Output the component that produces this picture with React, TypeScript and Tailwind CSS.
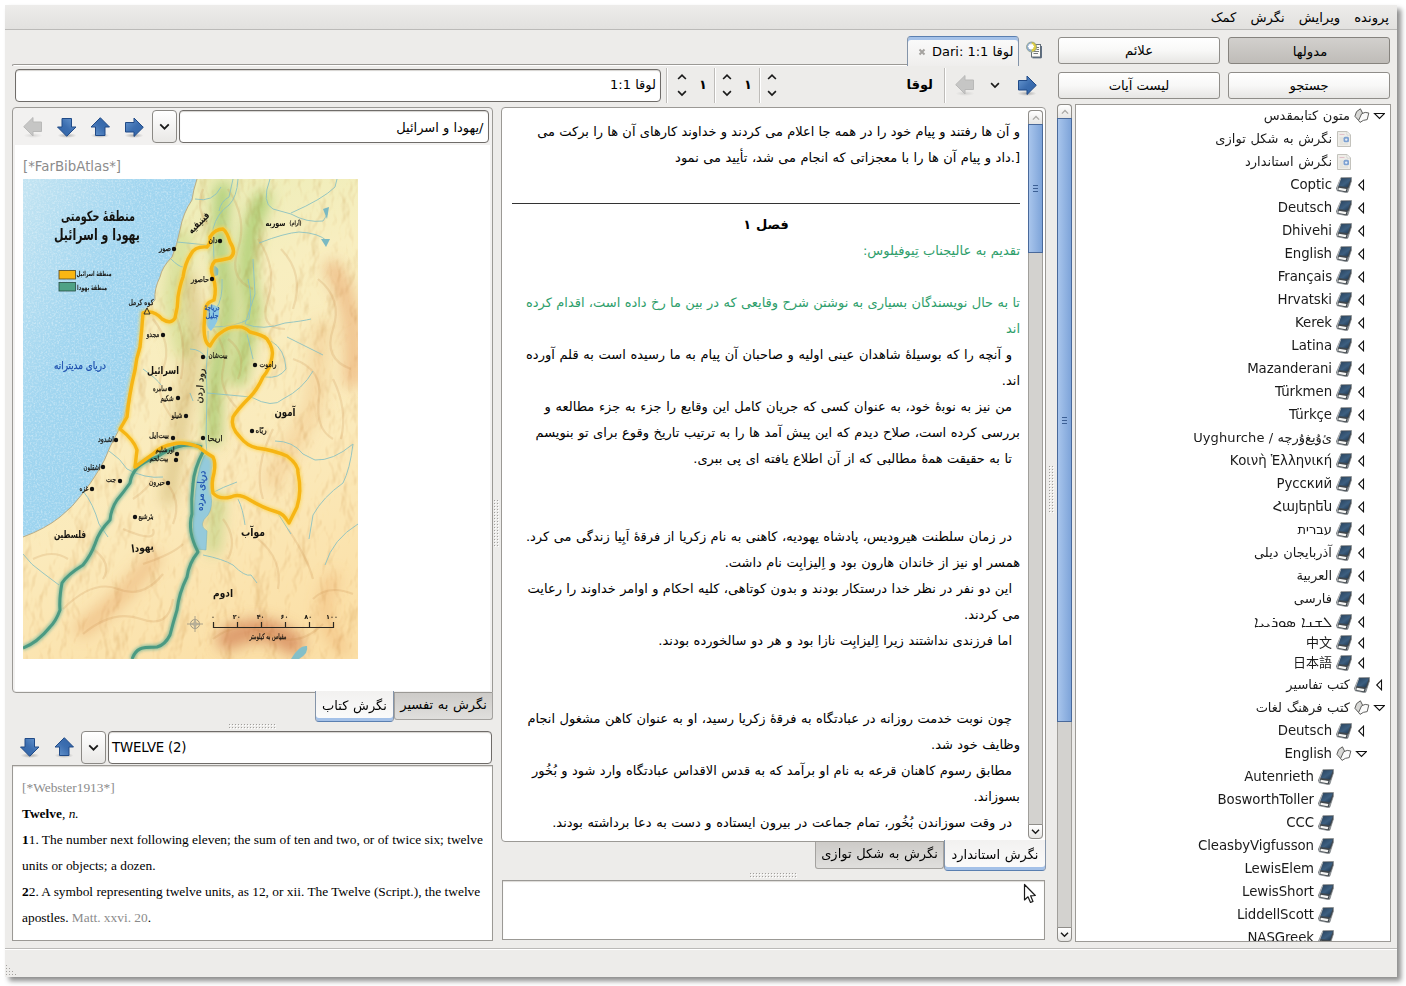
import React from 'react';

const UI = "font-['DejaVu_Sans','Noto_Sans_CJK_SC',sans-serif]";

function Arrow({ dir, muted = false }: { dir: 'left' | 'right' | 'up' | 'down'; muted?: boolean }) {
  const turn = { right: 0, down: 90, left: 180, up: 270 }[dir];
  return (
    <svg width="24" height="24" viewBox="0 0 24 24" className="shrink-0">
      <defs>
        <linearGradient id="arrowBlue" x1="0" y1="0" x2="1" y2="1">
          <stop offset="0" stopColor="#6c9bd2" />
          <stop offset="0.5" stopColor="#3c6eb0" />
          <stop offset="1" stopColor="#2f62a5" />
        </linearGradient>
        <radialGradient id="arrowShade">
          <stop offset="0" stopColor="#000" stopOpacity="0.28" />
          <stop offset="1" stopColor="#000" stopOpacity="0" />
        </radialGradient>
      </defs>
      <ellipse cx="12" cy="20.5" rx="9.5" ry="2.5" fill="url(#arrowShade)" opacity={muted ? 0.4 : 1} />
      <path
        transform={`rotate(${turn} 12 12)`}
        d="M3.5 7.5H12V3L21.3 12.3L12 21.5V17H3.500Z"
        fill={muted ? '#c6c6c5' : 'url(#arrowBlue)'}
        stroke={muted ? '#b9b9b8' : '#204a87'}
        strokeWidth="1"
        strokeLinejoin="round"
      />
    </svg>
  );
}

function Chevron({ up = false, w = 9, color = '#1a1a1a' }: { up?: boolean; w?: number; color?: string }) {
  return (
    <svg width={w} height={w} viewBox="0 0 9 9" className="shrink-0">
      <path d={up ? 'M1 6.3L4.5 2.8L8 6.3' : 'M1 2.8L4.5 6.3L8 2.8'} fill="none" stroke={color} strokeWidth="1.5" />
    </svg>
  );
}

function ComboButton() {
  return (
    <div className="flex h-[33px] w-[25px] shrink-0 items-center justify-center rounded-[4px] border border-[#8b8985] bg-linear-to-b from-white to-[#e9e8e6]">
      <Chevron w={11} />
    </div>
  );
}

function Spinner() {
  return (
    <div className="flex w-[14px] flex-col items-center gap-[6px]">
      <Chevron up w={10} />
      <Chevron w={10} />
    </div>
  );
}

function Grip({ vertical = false }: { vertical?: boolean }) {
  const cols = vertical ? 2 : 16;
  const rowCount = vertical ? 16 : 2;
  const dots: string[] = [];
  for (let r = 0; r < rowCount; r++) {
    for (let c = 0; c < cols; c++) dots.push(`M${c * 3} ${r * 3}h1v1h-1z`);
  }
  return (
    <svg width={cols * 3} height={rowCount * 3} className="shrink-0">
      <path d={dots.join('')} fill="#fff" transform="translate(1 1)" />
      <path d={dots.join('')} fill="#a19f9c" />
    </svg>
  );
}

function BookIcon() {
  return (
    <svg width="16" height="16" viewBox="0 0 16 16" className="shrink-0">
      <defs>
        <linearGradient id="cover" x1="0" y1="0" x2="1" y2="1">
          <stop offset="0" stopColor="#27415c" />
          <stop offset="0.55" stopColor="#3d5f80" />
          <stop offset="1" stopColor="#1a3149" />
        </linearGradient>
      </defs>
      <path
        d="M4.900 0.700L15.500 0.500L15.400 4.200L11.800 15.200L9.900 15.500L1.200 13.800L0.400 11.200Z"
        fill="#3f464c"
        stroke="#85898c"
        strokeWidth="0.7"
        strokeLinejoin="round"
      />
      <path d="M5.300 1.300L14.900 1.200L11.700 10.200L2.600 8.900Z" fill="url(#cover)" />
      <path d="M2.600 10.700L10.400 12L9.700 14.200L2.500 12.900Z" fill="#f4f4f2" />
      <path d="M4.700 1.500L1.300 11L1.900 13.200" fill="none" stroke="#c5c8ca" strokeWidth="0.8" />
      <path d="M12.400 10.800L11.300 14.500" stroke="#b5b9bc" strokeWidth="0.7" />
    </svg>
  );
}

function OpenBookIcon() {
  return (
    <svg width="16" height="16" viewBox="0 0 16 16" className="shrink-0">
      <path d="M2.600 3.600L6.400 0.800L8.600 5.200L5.600 13.600L0.900 8.300Z" fill="#d8d8d6" stroke="#5c5c5a" strokeWidth="1" strokeLinejoin="round" />
      <path d="M7.600 5.800Q11.200 3.400 14.800 5L13.200 11.600Q9 11.800 6 14.400L4.600 12.400Z" fill="#fafafa" stroke="#60605e" strokeWidth="1" strokeLinejoin="round" />
    </svg>
  );
}

function PageIcon() {
  return (
    <svg width="16" height="16" viewBox="0 0 16 16" className="shrink-0">
      <path d="M1.500 0.500H11L14.500 4V15.500H1.500Z" fill="#eeede8" stroke="#c3c2bc" />
      <path d="M11 0.500V4H14.500Z" fill="#fff" stroke="#c9c8c3" strokeWidth="0.7" />
      <path d="M3.500 3.500H8.500" stroke="#e2c0ca" />
      <path d="M3.500 7H7M3.500 9H7M3.500 11H7M3.500 13H12" stroke="#dadad4" />
      <rect x="7.500" y="5.800" width="5.500" height="5.500" rx="1.500" fill="#7ea2d2" />
      <circle cx="10.200" cy="8.600" r="1.200" fill="#e8eef6" />
    </svg>
  );
}

function NewTabIcon() {
  return (
    <svg width="16" height="18" viewBox="0 0 16 18" className="shrink-0">
      <rect x="5.500" y="3.500" width="9" height="12.500" fill="#fafaf8" stroke="#66717b" strokeWidth="1" />
      <path d="M10 6.500H13M10.500 8.500H13M7.500 10.500H13M7.500 12.500H12" stroke="#777b7d" />
      <path d="M15.300 5V16.800H6.500" fill="none" stroke="#3d5068" strokeWidth="1" />
      <circle cx="5.600" cy="6" r="5" fill="#dccb3e" stroke="#8b9a7e" strokeWidth="0.8" />
      <path d="M5.600 1A5 5 0 0 0 5.600 11Z" fill="#8ea9c8" />
      <path d="M5 2.400V8.600M1.900 5.500H8.100M2.900 3.400L7.100 7.600M7.100 3.400L2.900 7.600" stroke="#fff" strokeWidth="1.400" />
    </svg>
  );
}

function Expander({ open }: { open: boolean }) {
  return (
    <svg width="12" height="12" viewBox="0 0 12 12" className="shrink-0">
      <path
        d={open ? 'M1.500 3.500H11.500L6.500 8.500Z' : 'M8.500 1.200V10.800L3.700 6Z'}
        fill="#fff"
        stroke="#111"
        strokeWidth="1.1"
      />
    </svg>
  );
}

type Row = [text: string, level: number, kind: 'closed' | 'open' | 'page' | 'leaf', height?: string];

const SHORT = 'h-[20px]';

const rows: Row[] = [
  ['متون کتابمقدس', 0, 'open', 'h-[22px]'],
  ['نگرش به شکل توازی', 1, 'page'],
  ['نگرش استاندارد', 1, 'page'],
  ['Coptic', 1, 'closed'],
  ['Deutsch', 1, 'closed'],
  ['Dhivehi', 1, 'closed'],
  ['English', 1, 'closed'],
  ['Français', 1, 'closed'],
  ['Hrvatski', 1, 'closed'],
  ['Kerek', 1, 'closed'],
  ['Latina', 1, 'closed'],
  ['Mazanderani', 1, 'closed'],
  ['Türkmen', 1, 'closed'],
  ['Türkçe', 1, 'closed'],
  ['Uyghurche / ئ\u200Cۇ\u200Cيغ\u200Cۇرچە', 1, 'closed'],
  ['Κοινὴ Ἑλληνική', 1, 'closed'],
  ['Русский', 1, 'closed'],
  ['Հայերեն', 1, 'closed'],
  ['עברית', 1, 'closed'],
  ['آذربایجان دیلی', 1, 'closed'],
  ['العربية', 1, 'closed'],
  ['فارسی', 1, 'closed'],
  ['ܠܫܢܐ ܣܘܪܝܝܐ', 1, 'closed'],
  ['中文', 1, 'closed', SHORT],
  ['日本語', 1, 'closed', SHORT],
  ['کتب تفاسیر', 0, 'closed'],
  ['کتب فرهنگ لغات', 0, 'open'],
  ['Deutsch', 1, 'closed'],
  ['English', 1, 'open'],
  ['Autenrieth', 2, 'leaf'],
  ['BosworthToller', 2, 'leaf'],
  ['CCC', 2, 'leaf'],
  ['CleasbyVigfusson', 2, 'leaf'],
  ['LewisElem', 2, 'leaf'],
  ['LewisShort', 2, 'leaf'],
  ['LiddellScott', 2, 'leaf'],
  ['NASGreek', 2, 'leaf'],
];

const indents = ['pr-[5px]', 'pr-[23px]', 'pr-[41px]'];

const scriptSize = (text: string) => {
  if (text.startsWith('Uyg')) return 'tracking-[0.1px]';
  if (/^[A-Z\u0370-\u058F]/.test(text)) return 'text-[13.33px] tracking-[-0.08px]';
  if (/^[\u0700-\u074F]/.test(text)) return 'text-[15px]';
  if (/^[\u0600-\u06FF]/.test(text)) return '[word-spacing:0.5px]';
  return '';
};

function Tree() {
  return (
    <div className="h-[838px] w-[316px] overflow-hidden border border-[#9c9a96] bg-white text-[#1a1a1a]">
      {rows.map(([text, level, kind, height], i) => (
        <div key={i} className={'flex items-center justify-end ' + indents[level] + ' ' + (height ?? 'h-[23px]')}>
          <span className={'whitespace-nowrap leading-[20px] ' + scriptSize(text)}>{text}</span>
          <span className="ml-[4px] flex">
            {kind === 'open' ? <OpenBookIcon /> : kind === 'page' ? <PageIcon /> : <BookIcon />}
          </span>
          <span className="ml-[3px] flex w-[12px]">
            {(kind === 'open' || kind === 'closed') && <Expander open={kind === 'open'} />}
          </span>
        </div>
      ))}
    </div>
  );
}

function ScrollBar({ thumb }: { thumb: string }) {
  return (
    <div className="flex h-full w-[15px] shrink-0 flex-col rounded-[4px] bg-[#d3d2cf]">
      <div className="flex h-[14px] shrink-0 items-center justify-center rounded-t-[4px] border border-b-0 border-[#8f8d89] bg-linear-to-b from-white to-[#e6e5e3]">
        <Chevron up w={8} color="#aaa9a6" />
      </div>
      <div
        className={
          'flex shrink-0 flex-col items-center justify-center gap-[2px] border border-[#49699a] bg-linear-to-r from-[#a8c5ec] to-[#7ea4d9] ' +
          thumb
        }
      >
        <div className="h-px w-[5px] bg-[#3c5f94]" />
        <div className="h-px w-[5px] bg-[#3c5f94]" />
        <div className="h-px w-[5px] bg-[#3c5f94]" />
      </div>
      <div className="grow border-x border-[#a19f9b]" />
      <div className="flex h-[15px] shrink-0 items-center justify-center rounded-b-[4px] border border-[#8f8d89] bg-linear-to-b from-white to-[#e6e5e3]">
        <Chevron w={9} />
      </div>
    </div>
  );
}

type Verse = [text: string, cls?: string];

const verses: Verse[] = [
  ['تقدیم به عالیجناب تِیوفیلوس:', 'text-[#2e9e6b]'],
  [''],
  ['تا به حال نویسندگان بسیاری به نوشتن شرح وقایعی که در بین ما رخ داده است، اقدام کرده', 'text-[#2e9e6b] [word-spacing:0.2px]'],
  ['اند', 'text-[#2e9e6b]'],
  ['و آنچه را که بوسیل\u200D\u200Cۀ شاهدان عینی اولیه و صاحبان آن پیام به ما رسیده است به قلم آورده', 'pr-[8px] [word-spacing:0.5px]'],
  ['اند.'],
  ['من نیز به نوب\u200D\u200Cۀ خود، به عنوان کسی که جریان کامل این وقایع را جزء به جزء مطالعه و', 'pr-[8px] [word-spacing:0.55px]'],
  ['بررسی کرده است، صلاح دیدم که این پیش آمد ها را به ترتیب تاریخ وقوع برای تو بنویسم', '[word-spacing:0.38px]'],
  ['تا به حقیقت هم\u200D\u200Cۀ مطالبی که از آن اطلاع یافته ای پی ببری.', 'pr-[8px]'],
  [''],
  [''],
  ['در زمان سلطنت هیرودیس، پادشاه یهودیه، کاهنی به نام زکریا از فرق\u200D\u200Cۀ اَبِیا زندگی می کرد.', 'pr-[8px]'],
  ['همسر او نیز از خاندان هارون بود و اِلیزابِت نام داشت.', '[word-spacing:0.4px]'],
  ['این دو نفر در نظر خدا درستکار بودند و بدون کوتاهی، کلیه احکام و اوامر خداوند را رعایت', 'pr-[8px] [word-spacing:0.25px]'],
  ['می کردند.'],
  ['اما فرزندی نداشتند زیرا اِلیزابِت نازا بود و هر دو سالخورده بودند.', 'pr-[8px] [word-spacing:0.45px]'],
  [''],
  [''],
  ['چون نوبت خدمت روزانه در عبادتگاه به فرق\u200D\u200Cۀ زکریا رسید، او به عنوان کاهن مشغول انجام', 'pr-[8px]'],
  ['وظایف خود شد.'],
  ['مطابق رسوم کاهنان قرعه به نام او برآمد که به قدس الاقداس عبادتگاه وارد شود و بُخُور', 'pr-[8px] [word-spacing:0.2px]'],
  ['بسوزاند.'],
  ['در وقت سوزاندن بُخُور، تمام جماعت در بیرون ایستاده و دست به دعا برداشته بودند.', 'pr-[8px] [word-spacing:0.45px]'],
];

const COAST =
  'M174 0Q170 12 169 21Q160 34 157 51Q154 66 149 78Q139 88 137 98Q131 110 132 121L120 133L119 151L114 178L107 211L100 244Q95 252 87 268Q82 282 74 294Q68 304 60 314Q50 328 37 338Q22 350 0 358';

const ISRAEL =
  'M124 133Q132 132 139 140Q148 146 152 139Q155 128 155 118Q157 106 160 98Q162 84 168 75Q172 67 184 68Q188 64 187 58Q192 50 200 50Q204 53 207 63Q214 74 207 79Q199 81 192 82Q186 88 190 98Q194 110 191 121Q182 124 182 132L181 148Q181 164 187 167Q192 158 196 155Q206 147 214 148Q221 147 227 153Q240 156 244 160Q251 170 249 178Q247 190 240 198Q234 211 227 218Q214 231 210 238Q207 248 217 258Q224 267 234 269Q250 271 264 277Q276 286 275 294Q279 312 274 328L266 344Q260 334 254 333Q240 329 227 321Q216 314 208 318Q196 321 190 314Q188 304 191 294Q193 284 190 278Q180 272 176 268Q160 262 150 265Q138 267 130 275L112 288L114 271Q111 261 97 250L104 238Q106 216 112 191Q113 180 117 168Q119 150 120 134Z';

const JUDAH_W =
  'M179 268Q166 264 154 268Q144 271 134 278Q121 282 114 289Q108 296 107 304Q100 314 94 321Q88 330 87 341Q76 352 72 365Q68 376 60 386Q44 396 39 404Q36 420 37 431Q33 442 27 448Q14 464 0 469';
const JUDAH_E =
  'M180 273Q171 290 170 305Q168 320 169 335Q164 352 175 373Q166 384 164 398Q156 414 154 431Q150 444 147 456Q142 466 134 468Q120 468 117 470Q112 472 109 480';

const RIVERS = [
  'M215 0Q214 18 206 26Q194 34 190 50L191 82M199 100Q200 120 193 130',
  'M185 152L185 167Q182 190 184 214L183 262L184 276',
  'M247 0Q238 24 250 30L268 35Q284 44 300 42Q306 34 304 30M268 34Q300 20 312 8L314 0',
  'M236 64Q262 54 276 53Q296 54 304 62',
  'M210 0L206 18Q198 22 196 32M172 20Q190 24 198 8',
  'M154 63L184 66M148 80Q156 88 160 88',
  'M190 148Q212 148 226 140Q230 120 225 100M230 80L232 115L222 145Q240 152 262 144Q280 142 288 140',
  'M224 155L230 180M248 162Q262 170 263 190Q256 200 242 198M264 158L300 176',
  'M184 214L228 218Q250 230 260 220Q280 210 290 192',
  'M167 170Q178 170 184 180M167 214L170 222',
  'M189 314Q200 308 214 303M215 320Q220 330 222 346M254 333L268 355',
  'M252 262Q270 262 280 275L292 281Q310 282 330 265Q327 290 320 304Q300 318 290 336L286 360M335 345Q310 360 302 386',
  'M180 376Q200 380 210 386Q222 398 228 396L234 404',
  'M60 312Q70 324 76 345L85 358M86 272Q98 280 104 290Q122 300 140 298',
  'M0 375Q8 386 20 394L36 406M120 190Q134 200 138 206',
];

const RIDGES = [
  'M190 150Q205 170 200 190T215 230M205 160Q225 175 215 200',
  'M235 60Q255 90 245 120T262 150M258 70Q282 95 270 130',
  'M270 180Q300 190 296 220T310 260M250 250Q230 290 240 320',
  'M130 140Q150 165 140 190T150 240M150 130Q165 160 158 200',
  'M140 300Q160 320 150 345M120 385Q150 375 160 365M100 350Q135 365 130 350',
  'M40 430Q70 400 95 410T140 395M60 455Q90 430 118 440T150 420',
  'M200 340Q215 360 205 380M235 360Q260 380 255 410M265 350Q285 380 290 400',
  'M190 460Q215 440 245 455T300 445M290 420Q305 405 330 415',
  'M10 380Q30 370 45 380M70 370Q90 385 80 400M110 320Q125 310 130 300',
  'M295 100Q320 120 310 150T328 190M310 200Q325 230 318 260',
  'M205 10Q225 40 215 70T230 110M180 10Q172 30 185 45',
];

const SPOTS: [number, number][] = [
  [151, 70], [197, 62], [189, 100], [140, 156], [180, 178], [232, 186], [147, 210], [155, 219], [163, 237],
  [93, 261], [150, 259], [180, 259], [229, 252], [154, 275], [153, 281], [80, 288], [97, 302], [69, 310], [145, 304], [112, 338],
];

type Label = [text: string, cx: number, y: number, width: number, size: number, style?: string, turn?: number];

const LABELS: Label[] = [
  ['منطقهٔ حکومتی', 75, 42, 74, 14, 'bold'],
  ['یهودا و اسرائیل', 74, 61, 86, 15.5, 'bold'],
  ['منطقهٔ اسرائیل', 71, 97, 35, 7, 'bold'],
  ['منطقهٔ یهودا', 69, 111, 30, 7, 'bold'],
  ['فینیقیه', 178, 46, 26, 10, 'bold', -45],
  ['سوریه', 252.5, 47, 20, 8.5, 'bold'],
  ['(اَرام)', 272.5, 46, 12, 6],
  ['صور', 142, 72, 12, 8],
  ['دان', 190, 64, 9, 8],
  ['حاصور', 177, 103, 18, 8],
  ['دریاچهٔ', 189, 131, 15, 7, 'blue'],
  ['جلیل', 189, 139, 13, 7, 'blue'],
  ['کوه کرمل', 118, 126, 25, 8],
  ['مجدو', 130, 158, 13, 8],
  ['بیت‌شان', 195, 179, 19, 8],
  ['راموت', 245, 188, 17, 8],
  ['دریای مدیترانه', 57, 190, 52, 10.5, 'blue'],
  ['اسرائیل', 140, 195, 32, 11, 'bold'],
  ['سامره', 137, 212, 14, 7.5],
  ['شکیم', 144, 222, 13, 8],
  ['شیلو', 154, 239, 11, 8],
  ['رود اردن', 180, 207, 35, 9, 'plain', -86],
  ['آمون', 262, 237, 21, 11, 'bold'],
  ['ربّاه', 238, 254, 11, 8],
  ['اشدود', 83, 263, 16, 8],
  ['بیت‌ایل', 136, 259, 20, 8],
  ['اریحا', 192, 262, 15, 8],
  ['اورشلیم', 142, 273, 19, 7],
  ['بیت‌لحم', 136, 281.5, 19, 7],
  ['اشقلون', 69, 291, 17, 8],
  ['جت', 88, 303, 10, 8],
  ['غزه', 61, 312, 9, 8],
  ['حبرون', 134, 306, 16, 8],
  ['بئرشبع', 123, 340, 15, 8],
  ['دریای مرده', 181, 312, 40, 10, 'blue', -86],
  ['فلسطین', 47, 359, 32, 10.5, 'bold'],
  ['یهودا', 120, 372, 22, 10.5, 'bold', -8],
  ['موآب', 230, 357, 24, 11, 'bold'],
  ['ادوم', 200, 418, 20, 11, 'bold'],
  ['مقیاس به کیلومتر', 245, 460, 37, 7.5],
];

function AtlasMap() {
  return (
    <svg width="335" height="480" viewBox="0 0 335 480" className="block font-['DejaVu_Sans']">
      <defs>
        <linearGradient id="land" x1="0.3" y1="0" x2="0.6" y2="1">
          <stop offset="0" stopColor="#e9edb6" />
          <stop offset="0.3" stopColor="#f8eec0" />
          <stop offset="0.65" stopColor="#fbeabb" />
          <stop offset="1" stopColor="#fbe0a8" />
        </linearGradient>
        <linearGradient id="sea" x1="0" y1="0" x2="1" y2="1">
          <stop offset="0" stopColor="#c3e4f2" />
          <stop offset="0.35" stopColor="#a2d6f0" />
          <stop offset="1" stopColor="#8ecdec" />
        </linearGradient>
        <filter id="relief" x="0" y="0" width="100%" height="100%">
          <feTurbulence type="fractalNoise" baseFrequency="0.034 0.02" numOctaves="4" seed="12" />
          <feDiffuseLighting surfaceScale="7" lightingColor="#ffffff" result="lit">
            <feDistantLight azimuth="200" elevation="62" />
          </feDiffuseLighting>
          <feColorMatrix type="matrix" values="0.45 0 0 0 0.62  0.8 0 0 0 0.31  1.2 0 0 0 -0.06  0 0 0 0 1" />
        </filter>
        <filter id="grain" x="0" y="0" width="100%" height="100%">
          <feTurbulence type="fractalNoise" baseFrequency="0.55" numOctaves="2" seed="4" />
          <feColorMatrix type="matrix" values="0 0 0 0 1  0 0 0 0 1  0 0 0 0 1  1.6 0 0 0 -0.68" />
        </filter>
        <filter id="soft" x="-50%" y="-50%" width="200%" height="200%">
          <feGaussianBlur stdDeviation="7" />
        </filter>
        <filter id="glow" x="-20%" y="-20%" width="140%" height="140%">
          <feGaussianBlur stdDeviation="1.6" />
        </filter>
        <clipPath id="seaClip">
          <path d={COAST + 'L0 0Z'} />
        </clipPath>
      </defs>
      <rect width="335" height="480" fill="url(#land)" />
      <g filter="url(#soft)" fill="none" strokeLinecap="round">
        <path d="M200 10L196 60L205 130L192 200L190 260" stroke="#8fbf58" strokeWidth="13" opacity="0.8" />
        <path d="M240 20Q215 70 230 130L215 200" stroke="#98c55e" strokeWidth="15" opacity="0.8" />
        <path d="M160 60L150 120L160 170" stroke="#c5d884" strokeWidth="20" opacity="0.6" />
        <path d="M165 100L175 150L160 230L145 320" stroke="#c4a95f" strokeWidth="13" opacity="0.55" />
        <path d="M310 90Q335 130 330 200" stroke="#e89a5c" strokeWidth="18" opacity="0.5" />
        <path d="M300 150L290 230L250 300" stroke="#f0bf80" strokeWidth="20" opacity="0.4" />
        <path d="M130 380Q100 420 60 450" stroke="#e9a868" strokeWidth="16" opacity="0.5" />
        <path d="M205 460Q240 440 270 465" stroke="#cc7448" strokeWidth="22" opacity="0.65" />
        <path d="M195 320L190 370" stroke="#a9cf78" strokeWidth="12" opacity="0.7" />
        <path d="M310 400Q290 440 320 470" stroke="#eaa763" strokeWidth="14" opacity="0.4" />
      </g>
      <rect width="335" height="480" filter="url(#relief)" className="mix-blend-multiply" opacity="0.55" />
      <g fill="none" stroke="#c68a4c" strokeWidth="2.2" opacity="0.2">
        {RIDGES.map((d) => (
          <path key={d} d={d} />
        ))}
      </g>
      <path d={COAST + 'L0 0Z'} fill="url(#sea)" />
      <g clipPath="url(#seaClip)">
        <rect width="335" height="480" filter="url(#grain)" opacity="0.55" />
      </g>
      <path d={COAST} fill="none" stroke="#b9a67a" strokeWidth="0.9" />
      <g fill="none" stroke="#8cc2c2" strokeWidth="1" opacity="0.9">
        {RIVERS.map((d) => (
          <path key={d} d={d} />
        ))}
      </g>
      <path d="M183 128Q190 122 196 130Q197 142 188 152Q180 146 183 128Z" fill="#8cc8e4" />
      <path d="M190 86Q197 88 195 96L190 98ZM300 30L306 28L304 40ZM298 60L307 60L303 68Z" fill="#7ab9c2" />
      <path
        d="M181 277Q188 271 190 282Q187 300 188 316Q190 328 185 336Q174 346 184 352L183 371L173 370Q168 350 171 335Q172 296 181 277Z"
        fill="#94cadb"
        stroke="#70aebf"
        strokeWidth="0.5"
      />
      <path d="M268 480Q276 466 284 467Q286 474 276 480Z" fill="#84bfc8" />
      <g fill="none" strokeLinejoin="round">
        <path d={ISRAEL} stroke="#fbd352" strokeWidth="6" filter="url(#glow)" opacity="0.7" />
        <path d={JUDAH_W} stroke="#79b79b" strokeWidth="5.5" filter="url(#glow)" opacity="0.8" />
        <path d={JUDAH_E} stroke="#79b79b" strokeWidth="5.5" filter="url(#glow)" opacity="0.8" />
        <path d={JUDAH_W} stroke="#4b9a82" strokeWidth="3" />
        <path d={JUDAH_E} stroke="#4b9a82" strokeWidth="3" />
        <path d={ISRAEL} stroke="#f6b514" strokeWidth="3.4" />
      </g>
      <rect x="36" y="91.500" width="16.500" height="8.500" fill="#f9b613" stroke="#544723" strokeWidth="0.8" />
      <rect x="36" y="103.500" width="16.500" height="8.500" fill="#4fa285" stroke="#264b40" strokeWidth="0.8" />
      <path d="M124 129L127 135H121Z" fill="#f8c744" stroke="#222" strokeWidth="0.9" />
      {SPOTS.map(([x, y], i) => (
        <circle key={i} cx={x} cy={y} r="2.200" fill="#111" />
      ))}
      {LABELS.map(([text, cx, y, width, size, style, turn], i) => (
        <text
          key={i}
          x={cx}
          y={y}
          direction="rtl"
          textAnchor="middle"
          textLength={width}
          lengthAdjust="spacingAndGlyphs"
          fontSize={size}
          fontWeight={style === 'bold' ? 700 : 400}
          fill={style === 'blue' ? '#1c4fae' : '#15130f'}
          stroke={style === 'blue' ? '#1c4fae' : '#15130f'}
          strokeWidth={style === 'bold' ? 0 : 0.25}
          transform={turn ? `rotate(${turn} ${cx} ${y})` : undefined}
        >
          {text}
        </text>
      ))}
      <path d="M190.500 443V448.500H310.500V443M214.500 443V448M238.500 443V448M262.500 443V448M286.500 443V448" fill="none" stroke="#2b2720" strokeWidth="1.200" />
      {['۰', '۲۰', '۴۰', '۶۰', '۸۰', '۱۰۰'].map((t, i) => (
        <text key={t} x={190 + i * 23.8} y="440" textAnchor="middle" fontSize="6.500" fontWeight="700" fill="#15130f">
          {t}
        </text>
      ))}
      <g stroke="#918b7c" fill="none" opacity="0.9">
        <circle cx="172" cy="445" r="4.500" />
        <path d="M164 445H180M172 437V453" strokeWidth="0.8" />
        <path d="M172 439L173.500 443.500L178 445L173.500 446.500L172 451L170.500 446.500L166 445L170.500 443.500Z" fill="#b0a995" stroke="none" />
      </g>
    </svg>
  );
}

function PushButton({ children, pressed = false }: { children: React.ReactNode; pressed?: boolean }) {
  return (
    <div
      className={
        'flex h-[27px] items-center justify-center rounded-[3px] border ' +
        (pressed
          ? 'border-[#86837e] bg-linear-to-b from-[#d2d0cd] to-[#bfbcb8] pt-[2px] pl-[2px]'
          : 'border-[#8f8d89] bg-linear-to-b from-white via-[#f8f8f7] to-[#e7e6e4]')
      }
    >
      {children}
    </div>
  );
}

function Separator() {
  return <div className="h-[35px] w-[2px] shrink-0 border-r border-l border-r-white border-l-[#bebcb9]" />;
}

const entry = 'flex items-center rounded-[4px] border border-[#6f6c69] bg-white shadow-[inset_0_1px_1px_#d5d3d0]';
const activeTab =
  'relative z-10 -mt-[2px] flex h-[31px] items-center justify-center rounded-b-[4px] border-x border-b border-[#5a7fb0] border-x-[#8494a9] bg-linear-to-b from-[#f2f1f0] to-[#fbfbfb] pb-[1px] shadow-[inset_0_-3px_0_#a4c1e8] [word-spacing:0.5px]';
const idleTab =
  'flex h-[27px] items-center justify-center rounded-b-[3px] border border-t-0 border-[#a4a29f] bg-linear-to-b from-[#cdcbc8] to-[#e0dfdd] pb-[2px] [word-spacing:0.5px]';

export default function App() {
  return (
    <div className={'h-[986px] w-[1406px] overflow-hidden bg-white pt-[5px] pl-[5px] text-[13px] text-black ' + UI}>
      <div className="flex h-[972px] w-[1392px] flex-col bg-[#edecea] shadow-[4px_4px_5px_rgba(0,0,0,0.45)]">
        <div
          dir="rtl"
          className="flex h-[25px] shrink-0 items-center gap-[14px] border-b border-[#bbbab8] bg-linear-to-b from-[#edecea] to-[#e2e1df] pt-[2px] pr-[8px] text-[13.2px]"
        >
          <span>پرونده</span>
          <span>ویرایش</span>
          <span>نگرش</span>
          <span>کمک</span>
        </div>

        <div className="flex h-[918px] shrink-0 justify-between pr-[6px] pl-[7px]">
          <div className="flex w-[1034px] flex-col">
            <div className="flex h-[36px] items-end">
              <div className="h-[2px] grow rounded-tl-[3px] border-t border-l border-[#9b9995] bg-white" />
              <div className="flex h-[30px] w-[112px] items-center gap-[6px] rounded-t-[4px] border border-b-0 border-[#5a7fb0] border-x-[#8494a9] bg-linear-to-b from-[#fbfbfb] to-[#efeeed] pt-[1px] pl-[10px] shadow-[inset_0_3px_0_#a4c1e8]">
                <svg width="8" height="8" viewBox="0 0 8 8" className="shrink-0">
                  <path d="M1.500 1.500L6.500 6.500M6.500 1.500L1.500 6.500" stroke="#a5a3a0" strokeWidth="2" />
                </svg>
                <span className="whitespace-nowrap">Dari: لوقا 1:1</span>
              </div>
              <div className="flex h-[36px] w-[27px] items-center justify-center pt-[4px] pl-[2px]">
                <NewTabIcon />
              </div>
            </div>

            <div className="flex h-[38px] items-center pl-[3px]">
              <div dir="rtl" className={entry + ' h-[33px] w-[646px] pr-[4px]'}>
                لوقا 1:1
              </div>
              <div className="flex grow items-center">
                <div className="ml-[5px]" />
                <Separator />
                <div className="flex w-[46px] items-center pl-[7px]">
                  <Spinner />
                  <b className="ml-[10px]">۱</b>
                </div>
                <Separator />
                <div className="flex w-[43px] items-center pl-[4px]">
                  <Spinner />
                  <b className="ml-[10px]">۱</b>
                </div>
                <Separator />
                <div className="flex w-[183px] items-center justify-between pr-[11px] pl-[4px]">
                  <Spinner />
                  <b>لوقا</b>
                </div>
                <Separator />
                <div className="flex items-center pl-[7px]">
                  <Arrow dir="left" muted />
                  <span className="mr-[15px] ml-[13px] flex">
                    <Chevron w={10} />
                  </span>
                  <Arrow dir="right" />
                </div>
              </div>
            </div>

            <div className="flex pt-[3px]">
              <div className="flex w-[481px] flex-col">
                <div className="flex h-[586px] flex-col rounded-t-[4px] rounded-bl-[4px] border border-[#9b9995] bg-[#f2f1f0] px-[2px] pt-[2px] pb-[1px]">
                  <div className="flex h-[35px] shrink-0 items-start pl-[6px]">
                    <div className="flex items-center gap-[9.500px] pt-[5px]">
                      <Arrow dir="left" muted />
                      <Arrow dir="down" />
                      <Arrow dir="up" />
                      <Arrow dir="right" />
                    </div>
                    <div className="ml-[6px]">
                      <ComboButton />
                    </div>
                    <div dir="rtl" className={entry + ' ml-[2px] h-[33px] w-[310px] pt-[2px] pr-[4px]'}>
                      /یهودا و اسرائیل
                    </div>
                  </div>
                  <div className="grow bg-white pt-[11px] pl-[8px]">
                    <div className="h-[23px] text-[13.33px] leading-[22px] text-[#8b8b8b]">[*FarBibAtlas*]</div>
                    <AtlasMap />
                  </div>
                </div>
                <div className="flex h-[29px] justify-end">
                  <div className={activeTab + ' w-[79px]'}>نگرش کتاب</div>
                  <div className={idleTab + ' w-[99px]'}>نگرش به تفسیر</div>
                </div>
                <div className="flex h-[9px] items-center justify-center pt-[1px]">
                  <Grip />
                </div>
                <div className="flex h-[34px] items-start pl-[6px]">
                  <div className="flex gap-[9.500px] pt-[4px]">
                    <Arrow dir="down" />
                    <Arrow dir="up" />
                  </div>
                  <div className="ml-[5.500px]">
                    <ComboButton />
                  </div>
                  <div className={entry + ' ml-[2px] h-[33px] w-[384px] pl-[3px] text-[13.33px] tracking-[-0.2px]'}>TWELVE (2)</div>
                </div>
                <div className="h-[176px] border border-[#9b9995] bg-white pt-[9px] pl-[9px] font-['Liberation_Serif',serif] text-[13.4px] leading-[26px] whitespace-nowrap shadow-[inset_0_1px_1px_#dddbd8]">
                  <div className="text-[#8b8b8b]">[*Webster1913*]</div>
                  <div>
                    <b>Twelve</b>, <i>n.</i>
                  </div>
                  <div>
                    <b>1</b>1. The number next following eleven; the sum of ten and two, or of twice six; twelve
                  </div>
                  <div>units or objects; a dozen.</div>
                  <div>
                    <b>2</b>2. A symbol representing twelve units, as 12, or xii. The Twelve (Script.), the twelve
                  </div>
                  <div>
                    apostles. <span className="text-[#8b8b8b]">Matt. xxvi. 20</span>.
                  </div>
                </div>
              </div>

              <div className="flex h-[834px] w-[8px] items-center justify-center">
                <Grip vertical />
              </div>

              <div className="flex w-[545px] flex-col">
                <div className="flex h-[735px] justify-between rounded-t-[4px] rounded-bl-[4px] border border-[#9b9995] bg-white p-[2px]">
                  <div
                    dir="rtl"
                    className="w-[517px] pt-[9px] pr-[1px] pl-[8px] leading-[26px] whitespace-nowrap [word-spacing:0.33px]"
                  >
                    <div className="[word-spacing:0.1px]">
                      و آن ها رفتند و پیام خود را در همه جا اعلام می کردند و خداوند کارهای آن ها را برکت می
                    </div>
                    <div>[.داد و پیام آن ها را با معجزاتی که انجام می شد، تأیید می نمود</div>
                    <div className="mt-[32px] h-[1px] bg-[#333]" />
                    <div className="mt-[8px] text-center font-bold">فصل ۱</div>
                    {verses.map(([text, cls], i) => (
                      <div key={i} className={'h-[26px] ' + (cls ?? '')}>
                        {text}
                      </div>
                    ))}
                  </div>
                  <ScrollBar thumb="h-[129px]" />
                </div>
                <div className="flex h-[30px] justify-end">
                  <div className={idleTab + ' w-[129px]'}>نگرش به شکل توازی</div>
                  <div className={activeTab + ' w-[102px]'}>نگرش استاندارد</div>
                </div>
                <div className="flex h-[8px] items-start justify-center pt-[1px]">
                  <Grip />
                </div>
                <div className="relative mr-[1px] ml-[1px] h-[60px] border border-[#9b9995] bg-white shadow-[inset_0_1px_1px_#dddbd8]">
                  <svg width="14" height="22" viewBox="0 0 14 22" className="absolute top-[2px] right-[7px]">
                    <path
                      d="M1.500 1.500V17L5 13.800L7.500 19.500L10 18.400L7.600 12.800L12.300 12.500Z"
                      fill="#fff"
                      stroke="#1a1a1a"
                      strokeWidth="1.200"
                      strokeLinejoin="round"
                    />
                  </svg>
                </div>
              </div>
            </div>
          </div>

          <div className="flex w-[5px] items-center pt-px">
            <Grip vertical />
          </div>

          <div className="flex w-[334px] flex-col pt-[7px]">
            <div className="grid grid-cols-2 gap-x-[8px] gap-y-[8px] pr-[1px] pl-[1px] text-[13.2px]">
              <PushButton>علائم</PushButton>
              <PushButton pressed>مدولها</PushButton>
              <PushButton>لیست آیات</PushButton>
              <PushButton>جستجو</PushButton>
            </div>
            <div className="flex h-[843px] justify-between pt-[5px]">
              <ScrollBar thumb="h-[604px]" />
              <Tree />
            </div>
          </div>
        </div>

        <div className="flex grow items-end border-t border-[#bbbab8] pb-[1px] pl-[1px] shadow-[inset_0_1px_0_#fff]">
          <svg width="12" height="12" viewBox="0 0 12 12">
            <path
              d="M0 1h1v1H0zM0 4h1v1H0zM3 4h1v1H3zM0 7h1v1H0zM3 7h1v1H3zM6 7h1v1H6zM0 10h1v1H0zM3 10h1v1H3zM6 10h1v1H6zM9 10h1v1H9z"
              fill="#a3a19e"
            />
          </svg>
        </div>
      </div>
    </div>
  );
}
